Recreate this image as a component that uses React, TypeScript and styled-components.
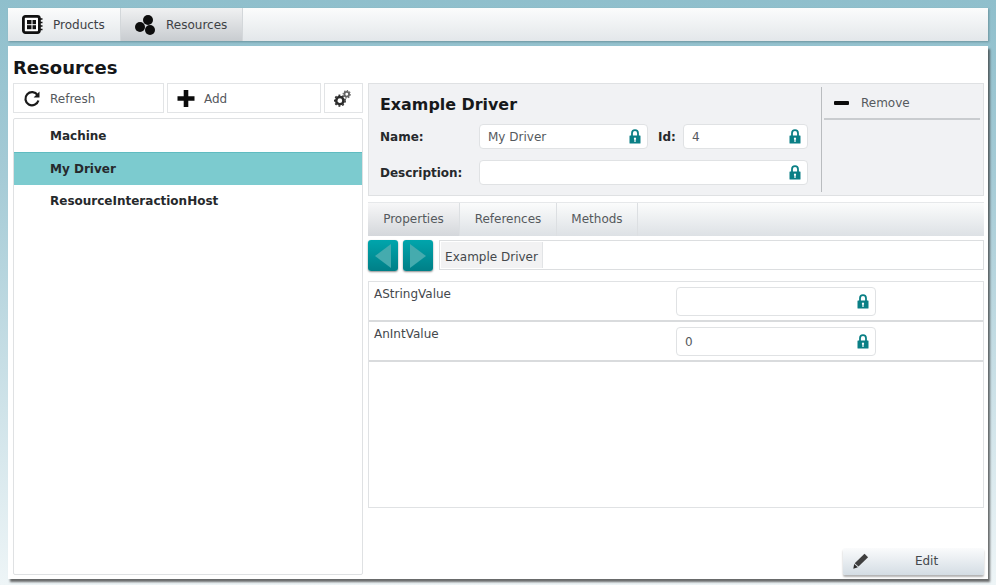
import styled, { createGlobalStyle } from 'styled-components';
import { ReactNode } from 'react';

const GlobalStyle = createGlobalStyle`
    html, body {
        margin: 0;
        height: 100%;
    }
    body {
        background: linear-gradient(180deg, #8fbfcc 0%, #a5cbd6 30%, #cfe3e9 70%, #eef5f7 100%);
        font-family: 'DejaVu Sans', Verdana, sans-serif;
        font-size: 12px;
        color: #3d4145;
        overflow: hidden;
    }
    * {
        box-sizing: border-box;
    }
`;

const Shell = styled.div`
    width: 980px;
    margin: 8px 0 0 8px;
    display: flex;
    flex-direction: column;
    gap: 5px;
`;

const TopBar = styled.nav`
    height: 33px;
    display: flex;
    background: linear-gradient(180deg, #fbfcfc 0%, #e3e7ea 100%);
    box-shadow: 1px 1px 2px rgba(60, 90, 100, 0.45);
`;

const TopTab = styled.div<{ $active?: boolean; $width: number }>`
    width: ${(p) => p.$width}px;
    display: flex;
    align-items: center;
    gap: 10px;
    padding-left: 14px;
    font-size: 12px;
    border-right: 1px solid #d3d7da;
    background: ${(p) =>
        p.$active
            ? 'linear-gradient(180deg, #f0f1f2 0%, #c8ccd0 100%)'
            : 'linear-gradient(180deg, #fbfcfc 0%, #e3e7ea 100%)'};
`;

const Panel = styled.main`
    height: 533px;
    padding: 10px 4px 4px 5px;
    background: #fff;
    box-shadow: 2px 3px 2px rgba(60, 60, 60, 0.75);
`;

const Title = styled.h1`
    margin: 0;
    height: 27px;
    font-family: 'DejaVu Sans', sans-serif;
    font-size: 18px;
    line-height: 23px;
    font-weight: 700;
    color: #141618;
`;

const Columns = styled.div`
    display: grid;
    grid-template-columns: 350px 616px;
    gap: 5px;
    height: 492px;
`;

const LeftColumn = styled.section`
    display: flex;
    flex-direction: column;
    gap: 5px;
`;

const ToolRow = styled.div`
    height: 30px;
    display: flex;
    gap: 3px;
`;

const ToolButton = styled.button<{ $width: number }>`
    width: ${(p) => p.$width}px;
    height: 30px;
    padding: 1px 0 0 9px;
    display: flex;
    align-items: center;
    gap: 9px;
    background: #fff;
    border: 1px solid #e2e4e6;
    font: inherit;
    color: #55595d;
`;

const ResourceList = styled.ul`
    flex: 1;
    margin: 0;
    padding: 0;
    list-style: none;
    border: 1px solid #dfe1e3;
    border-radius: 2px;
`;

const ResourceRow = styled.li<{ $selected?: boolean }>`
    height: 33px;
    padding: 0 0 1px 36px;
    display: flex;
    align-items: center;
    font-weight: 700;
    font-size: 12px;
    color: #26292c;
    background: ${(p) => (p.$selected ? '#7ccbcf' : 'transparent')};
    border-top: ${(p) => (p.$selected ? '1px solid #5fbcc1' : 'none')};
    &:first-child {
        padding-bottom: 0;
    }
`;

const RightColumn = styled.section`
    display: flex;
    flex-direction: column;
`;

const Details = styled.div`
    height: 113px;
    display: flex;
    background: #f1f2f4;
    border: 1px solid #dfe1e3;
    padding: 3px 3px 3px 11px;
`;

const DetailsMain = styled.div`
    width: 442px;
    padding-top: 6px;
    border-right: 1px solid #b9bcbf;
`;

const DetailsTitle = styled.h2`
    margin: 0 0 7px;
    height: 24px;
    font-size: 15.9px;
    line-height: 24px;
    font-weight: 700;
    color: #17191b;
`;

const FieldGrid = styled.div`
    display: grid;
    grid-template-columns: 99px 169px 35px 125px;
    grid-template-rows: 25px 25px;
    row-gap: 11px;
    align-items: center;
`;

const FieldLabel = styled.label<{ $indent?: number }>`
    font-weight: 700;
    font-size: 12px;
    color: #26292c;
    padding-left: ${(p) => p.$indent ?? 0}px;
`;

const LockedInput = styled.div<{ $span?: number; $height?: number }>`
    grid-column: span ${(p) => p.$span ?? 1};
    height: ${(p) => p.$height ?? 25}px;
    display: flex;
    align-items: center;
    justify-content: space-between;
    padding: 0 6px 0 8px;
    background: #fff;
    border: 1px solid #e0e2e4;
    border-radius: 4px;
    color: #55595d;
`;

const DetailsSide = styled.div`
    flex: 1;
    margin-left: 2px;
`;

const RemoveRow = styled.div`
    height: 33px;
    display: flex;
    align-items: center;
    gap: 12px;
    padding-left: 10px;
    border-bottom: 2px solid #c9cccf;
    color: #55595d;
`;

const Minus = styled.span`
    width: 15px;
    height: 4px;
    border-radius: 1px;
    background: #0b0b0b;
`;

const TabBar = styled.div`
    height: 34px;
    margin-top: 6px;
    display: flex;
    background: linear-gradient(180deg, #fbfcfc 0%, #dde1e5 100%);
    border-top: 1px solid #e6e8ea;
`;

const Tab = styled.div<{ $width: number; $active?: boolean }>`
    width: ${(p) => p.$width}px;
    padding-bottom: 2px;
    display: flex;
    align-items: center;
    justify-content: center;
    border-right: 1px solid #dcdfe2;
    color: #55595d;
    background: ${(p) =>
        p.$active ? 'linear-gradient(180deg, #f7f7f8 0%, #d4d7db 100%)' : 'transparent'};
`;

const PathRow = styled.div`
    height: 31px;
    margin-top: 4px;
    display: flex;
    gap: 5px;
`;

const NavButton = styled.button`
    width: 30px;
    height: 31px;
    padding: 0;
    display: flex;
    align-items: center;
    justify-content: center;
    border: none;
    border-radius: 3px;
    background: linear-gradient(180deg, #00a5ac 0%, #007f87 100%);
    box-shadow: 0 1px 2px rgba(0, 0, 0, 0.45);
`;

const PathBox = styled.div`
    flex: 1;
    height: 30px;
    margin-left: 1px;
    padding: 1px;
    border: 1px solid #dcdee0;
    display: flex;
`;

const PathItem = styled.span`
    width: 102px;
    padding-top: 3px;
    display: flex;
    align-items: center;
    justify-content: center;
    background: #f2f2f3;
    border-right: 1px solid #e2e4e6;
    color: #44484c;
`;

const PropertyBox = styled.div`
    height: 227px;
    margin-top: 10px;
    border: 1px solid #e0e2e4;
`;

const PropertyRow = styled.div`
    height: 40px;
    display: grid;
    grid-template-columns: 302px 200px;
    padding: 5px 0 0 5px;
    border-bottom: 2px solid #d9dbdd;
    color: #44484c;
`;

const PropertyName = styled.span`
    line-height: 15px;
`;

const Footer = styled.div`
    flex: 1;
    display: flex;
    justify-content: flex-end;
    align-items: flex-end;
`;

const EditButton = styled.button`
    width: 141px;
    height: 27px;
    padding: 0 0 2px 10px;
    display: flex;
    align-items: center;
    border: none;
    border-radius: 2px;
    background: linear-gradient(180deg, #fafbfc 0%, #d4dde4 100%);
    box-shadow: 0 2px 2px rgba(0, 0, 0, 0.3);
    font: inherit;
    color: #44484c;
`;

const EditLabel = styled.span`
    flex: 1;
    text-align: center;
`;

function Lock() {
    return (
        <svg width="12" height="15" viewBox="0 0 12 15">
            <path
                d="M3 7V4.2a3 3 0 0 1 6 0V7"
                fill="none"
                stroke="#0a7f85"
                strokeWidth="1.8"
            />
            <path
                fillRule="evenodd"
                fill="#0a7f85"
                d="M1 6.5h10a.5.5 0 0 1 .5.5v7a.5.5 0 0 1-.5.5H1a.5.5 0 0 1-.5-.5V7a.5.5 0 0 1 .5-.5zM6 8.6a1.2 1.2 0 0 0-.6 2.2V13h1.2v-2.2A1.2 1.2 0 0 0 6 8.6z"
            />
        </svg>
    );
}

function ProductIcon() {
    return (
        <svg width="21" height="19" viewBox="0 0 21 19">
            <rect x="1.4" y="1.4" width="16" height="16.2" rx="2" fill="#fff" stroke="#111" strokeWidth="2.8" />
            <rect x="5" y="5" width="4.5" height="4.2" fill="#111" />
            <rect x="10.5" y="5" width="3.5" height="4.2" fill="#111" />
            <rect x="5" y="10.2" width="4.5" height="4" fill="#111" />
            <rect x="10.5" y="10.2" width="3.5" height="4" fill="#111" />
            <path d="M18 4h2.5M18 7.5h2.5M18 11h2.5M18 14.5h2.5" stroke="#111" strokeWidth="1.6" />
        </svg>
    );
}

function ClusterIcon() {
    return (
        <svg width="21" height="20" viewBox="0 0 21 20">
            <circle cx="13" cy="5" r="5" fill="#0d0d0d" />
            <circle cx="5" cy="12" r="5" fill="#0d0d0d" />
            <circle cx="15" cy="15" r="5" fill="#0d0d0d" />
        </svg>
    );
}

function RefreshIcon() {
    return (
        <svg width="18" height="18" viewBox="0 0 18 18">
            <path d="M14.6 5.2A6.6 6.6 0 1 0 15.4 10.5" fill="none" stroke="#1a1a1a" strokeWidth="2.2" />
            <polygon points="16.5,1.5 16.5,7.6 10.6,7.6" fill="#1a1a1a" />
        </svg>
    );
}

function PlusIcon() {
    return (
        <svg width="18" height="17" viewBox="0 0 17 17">
            <path d="M6.2 0h4.6v6.2H17v4.6h-6.2V17H6.2v-6.2H0V6.2h6.2z" fill="#0b0b0b" />
        </svg>
    );
}

function GearsIcon() {
    return (
        <svg width="17" height="17" viewBox="0 0 16 16">
            <circle cx="5.5" cy="10" r="3.4" fill="none" stroke="#2b2b2b" strokeWidth="2.4" />
            <circle cx="5.5" cy="10" r="5" fill="none" stroke="#2b2b2b" strokeWidth="1.4" strokeDasharray="1.8 1.8" />
            <circle cx="12" cy="4" r="2.2" fill="none" stroke="#666" strokeWidth="1.8" />
            <circle cx="12" cy="4" r="3.4" fill="none" stroke="#666" strokeWidth="1.1" strokeDasharray="1.3 1.3" />
        </svg>
    );
}

function PencilIcon() {
    return (
        <svg width="16" height="16" viewBox="0 0 16 16">
            <path d="M11.5 0.8l3.6 3.4-9.6 9.4-3.8-3.4z" fill="#3f3f3f" />
            <path d="M1.2 10.9l3.7 3.4-4.6 1.4z" fill="#2b2b2b" />
        </svg>
    );
}

function Arrow({ flip }: { flip?: boolean }) {
    return (
        <svg width="18" height="24" viewBox="0 0 18 24">
            <polygon points={flip ? '1,0 17,12 1,24' : '17,0 1,12 17,24'} fill="#45abae" />
        </svg>
    );
}

function Input({ children, ...rest }: { children?: ReactNode; $span?: number; $height?: number }) {
    return (
        <LockedInput {...rest}>
            <span>{children}</span>
            <Lock />
        </LockedInput>
    );
}

export default function App() {
    return (
        <>
            <GlobalStyle />
            <Shell>
                <TopBar>
                    <TopTab $width={113}>
                        <ProductIcon />
                        Products
                    </TopTab>
                    <TopTab $width={122} $active>
                        <ClusterIcon />
                        Resources
                    </TopTab>
                </TopBar>
                <Panel>
                    <Title>Resources</Title>
                    <Columns>
                        <LeftColumn>
                            <ToolRow>
                                <ToolButton $width={151}>
                                    <RefreshIcon />
                                    Refresh
                                </ToolButton>
                                <ToolButton $width={154}>
                                    <PlusIcon />
                                    Add
                                </ToolButton>
                                <ToolButton $width={39}>
                                    <GearsIcon />
                                </ToolButton>
                            </ToolRow>
                            <ResourceList>
                                <ResourceRow>Machine</ResourceRow>
                                <ResourceRow $selected>My Driver</ResourceRow>
                                <ResourceRow>ResourceInteractionHost</ResourceRow>
                            </ResourceList>
                        </LeftColumn>
                        <RightColumn>
                            <Details>
                                <DetailsMain>
                                    <DetailsTitle>Example Driver</DetailsTitle>
                                    <FieldGrid>
                                        <FieldLabel>Name:</FieldLabel>
                                        <Input>My Driver</Input>
                                        <FieldLabel $indent={10}>Id:</FieldLabel>
                                        <Input>4</Input>
                                        <FieldLabel>Description:</FieldLabel>
                                        <Input $span={3} />
                                    </FieldGrid>
                                </DetailsMain>
                                <DetailsSide>
                                    <RemoveRow>
                                        <Minus />
                                        Remove
                                    </RemoveRow>
                                </DetailsSide>
                            </Details>
                            <TabBar>
                                <Tab $width={92} $active>Properties</Tab>
                                <Tab $width={97}>References</Tab>
                                <Tab $width={81}>Methods</Tab>
                            </TabBar>
                            <PathRow>
                                <NavButton><Arrow /></NavButton>
                                <NavButton><Arrow flip /></NavButton>
                                <PathBox>
                                    <PathItem>Example Driver</PathItem>
                                </PathBox>
                            </PathRow>
                            <PropertyBox>
                                <PropertyRow>
                                    <PropertyName>AStringValue</PropertyName>
                                    <Input $height={29} />
                                </PropertyRow>
                                <PropertyRow>
                                    <PropertyName>AnIntValue</PropertyName>
                                    <Input $height={29}>0</Input>
                                </PropertyRow>
                            </PropertyBox>
                            <Footer>
                                <EditButton>
                                    <PencilIcon />
                                    <EditLabel>Edit</EditLabel>
                                </EditButton>
                            </Footer>
                        </RightColumn>
                    </Columns>
                </Panel>
            </Shell>
        </>
    );
}
